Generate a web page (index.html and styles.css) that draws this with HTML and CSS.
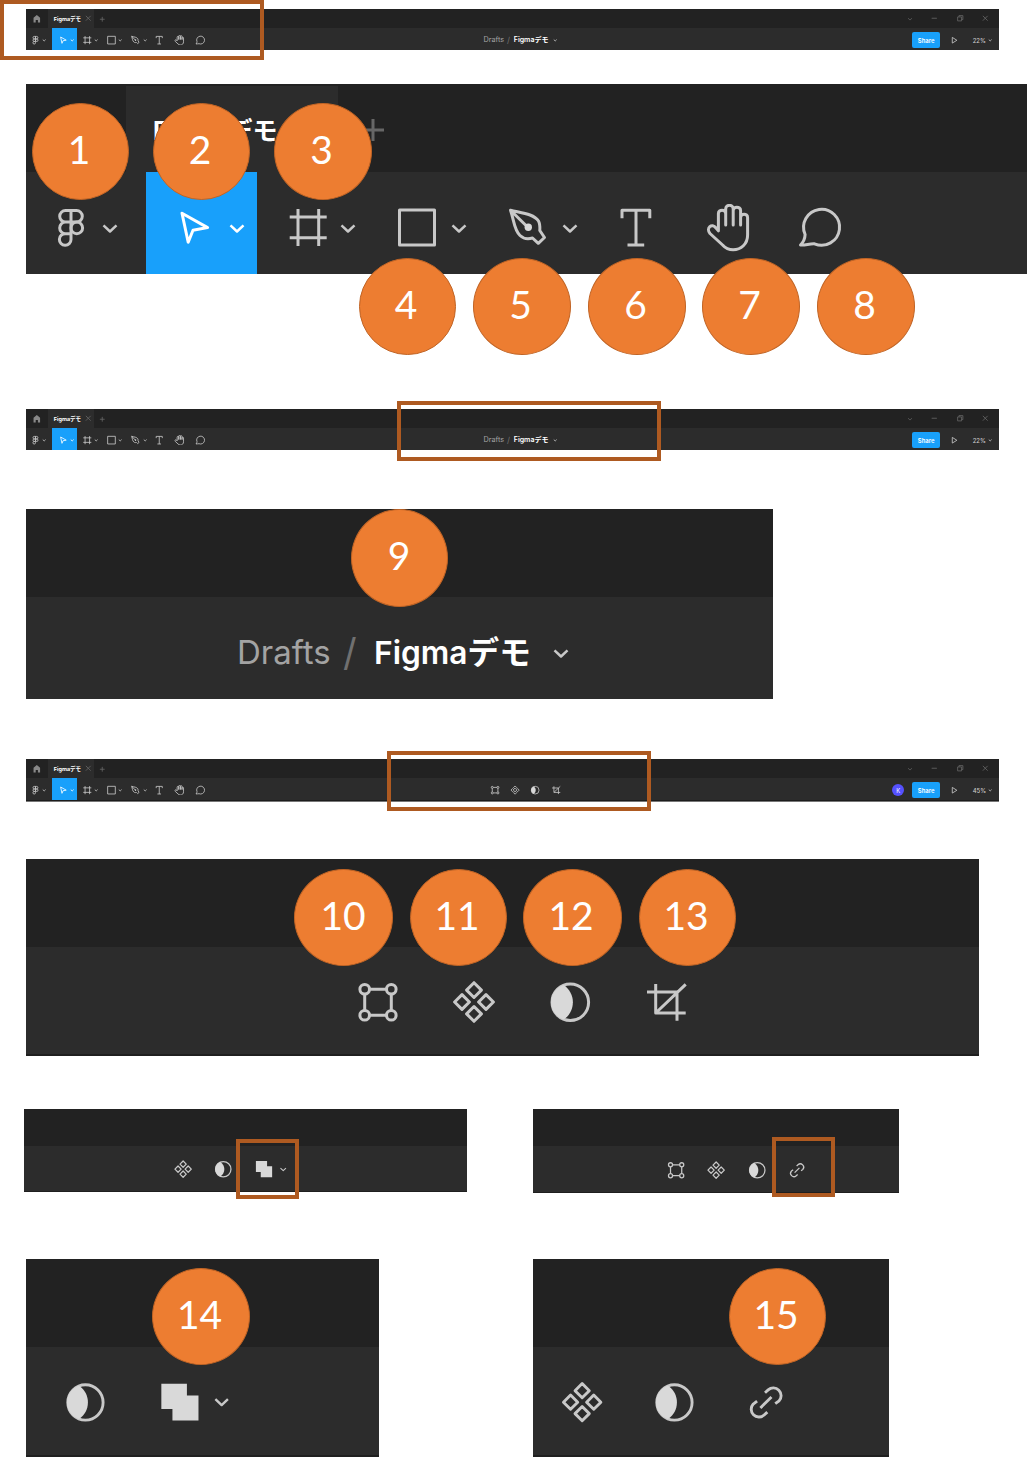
FILE: index.html
```html
<!DOCTYPE html>
<html lang="ja">
<head>
<meta charset="utf-8">
<title>Figmaデモ</title>
<link rel="stylesheet" href="styles.css">
</head>
<body>
<svg class="sprite" aria-hidden="true">
  <symbol id="figma" viewBox="0 0 48 48"><path d="M25 6.500h-5.500a5.800 5.800 0 0 0 0 11.600H25zM25 6.500h5.500a5.800 5.800 0 0 1 0 11.600H25zM25 18.100h-5.500a5.800 5.800 0 0 0 0 11.600H25zM19.500 29.700a5.800 5.800 0 1 0 5.500 5.800v-5.800z"/><circle cx="30.800" cy="23.900" r="5.800"/></symbol>
  <symbol id="move" viewBox="0 0 48 48"><path d="M12 9.200 37.600 23.600 23 26.200 18.200 38.200z"/></symbol>
  <symbol id="frame" viewBox="0 0 48 48"><path d="M14 5v37M34.700 5v37M5.700 13h37M5.700 33.700h37"/></symbol>
  <symbol id="rect" viewBox="0 0 48 48"><path d="M7.500 6h35v35h-35z"/></symbol>
  <symbol id="pen" viewBox="0 0 48 48"><path d="M7.500 6.200C19 9 31 10 35.500 17c1.700 3 1.500 6 1.300 9.500l4.700 7-6.200 5.800-5.800-5.300c-5 1.500-9 .8-12.500-2.500C11 26 11 16 7.500 6.200L24 22.500"/><circle class="solid" cx="25.300" cy="23.300" r="3.700"/></symbol>
  <symbol id="text" viewBox="0 0 48 48"><path d="M10 14.300V6.300h27.800v8M24 6.300V41M15.500 41h16.700"/></symbol>
  <symbol id="hand" viewBox="0 0 48 48"><path d="M14.400 26.800V9.500c0-4.500 7.300-4.500 7.300 0V21 4.800c0-4.700 7.500-4.700 7.500 0V21 6.500c0-4.500 7.400-4.500 7.400 0V21v-7.500c0-4.500 7-4.500 7 0V31c0 9-6.500 14.800-14.500 14.800-4.800 0-8-2-10.500-4.800L6 29.500c-4.500-5.500 2-11 6-5.500z"/></symbol>
  <symbol id="comment" viewBox="0 0 48 48"><path d="M4.500 41c3.500-3.500 4.500-7 4.600-10.500A18 18 0 1 1 18.500 39.800C13.500 39.500 9 41.500 4.500 41z"/></symbol>
  <symbol id="chev" viewBox="0 0 20 20"><path d="M3.500 7.300 10 13.500l6.500-6.200"/></symbol>
  <symbol id="vector" viewBox="0 0 48 48"><path d="M15.500 11.300h17M15.500 37.300h17M10.700 16v16.500M37.300 16v16.500"/><circle cx="10.700" cy="11.300" r="4.800"/><circle cx="37.300" cy="11.300" r="4.800"/><circle cx="10.700" cy="37.300" r="4.800"/><circle cx="37.300" cy="37.300" r="4.800"/></symbol>
  <symbol id="component" viewBox="0 0 48 48"><path d="m24 4.700 7.400 7.400-7.400 7.400-7.400-7.400zM24 28.500l7.400 7.400-7.400 7.400-7.400-7.400zM12 16.600l7.400 7.400-7.400 7.400L4.600 24zM36 16.600l7.400 7.400-7.400 7.400-7.400-7.400z"/></symbol>
  <symbol id="mask" viewBox="0 0 48 48"><circle cx="24.300" cy="24.300" r="18.300"/><path class="solid" d="M17.500 7C30 15 30 33.500 17.500 41.600 1 35 1 13.500 17.500 7z"/></symbol>
  <symbol id="crop" viewBox="0 0 48 48"><path d="M13.700 6v29h30M5 14h30v28.700M13.700 35l30-28.700"/></symbol>
  <symbol id="union" viewBox="0 0 48 48"><path class="solid" d="M4.500 5h26.500V17h12v26h-27V31H4.500z"/></symbol>
  <symbol id="link" viewBox="0 0 48 48"><path d="m18 30 11.500-11.400M22.800 14.300l3.300-3a8 8 0 0 1 11.300 11.300l-4 3M25.200 34.300l-3.300 3a8 8 0 0 1-11.300-11.300l4-3"/></symbol>
  <symbol id="home" viewBox="0 0 48 48"><path class="solid" d="M22 9 7 22v21h10V32h10v11h10V22z"/></symbol>
  <symbol id="close" viewBox="0 0 48 48"><path d="m13 13 22 22M35 13 13 35"/></symbol>
  <symbol id="plus" viewBox="0 0 48 48"><path d="M24 13v22M13 24h22"/></symbol>
  <symbol id="min" viewBox="0 0 48 48"><path d="M12 24h24"/></symbol>
  <symbol id="restore" viewBox="0 0 48 48"><path d="M12 18h18v18H12zM18 18v-6h18v18h-6"/></symbol>
  <symbol id="play" viewBox="0 0 48 48"><path d="M15 11v26l21-13z"/></symbol>
</svg>

<main>
  <section class="panel bar">
    <header class="titlebar">
      <span class="homebox"><svg class="i dim"><use href="#home"/></svg></span>
      <span class="tab"><b>Figmaデモ</b><svg class="i dim"><use href="#close"/></svg></span>
      <svg class="i dim plus"><use href="#plus"/></svg>
      <span class="window"><svg class="c dim"><use href="#chev"/></svg><svg class="i dim"><use href="#min"/></svg><svg class="i dim"><use href="#restore"/></svg><svg class="i dim"><use href="#close"/></svg></span>
    </header>
    <div class="toolbar">
      <nav class="tools">
        <span class="tool main"><svg class="i"><use href="#figma"/></svg><svg class="c"><use href="#chev"/></svg></span>
        <span class="tool active"><svg class="i"><use href="#move"/></svg><svg class="c"><use href="#chev"/></svg></span>
        <span class="tool framer"><svg class="i"><use href="#frame"/></svg><svg class="c"><use href="#chev"/></svg></span>
        <span class="tool"><svg class="i"><use href="#rect"/></svg><svg class="c"><use href="#chev"/></svg></span>
        <span class="tool"><svg class="i"><use href="#pen"/></svg><svg class="c"><use href="#chev"/></svg></span>
        <span class="tool single"><svg class="i"><use href="#text"/></svg></span>
        <span class="tool single"><svg class="i"><use href="#hand"/></svg></span>
        <span class="tool single"><svg class="i"><use href="#comment"/></svg></span>
      </nav>
      <div class="crumb"><span class="drafts">Drafts</span><span class="slash">/</span><span class="file">Figmaデモ</span><svg class="c"><use href="#chev"/></svg></div>
      <div class="right"><span class="share">Share</span><svg class="i play"><use href="#play"/></svg><span class="zoom">22%</span><svg class="c"><use href="#chev"/></svg></div>
    </div>
    <i class="mark mark-a"></i>
  </section>

  <section class="panel large tools-detail">
    <header class="titlebar">
      <span class="homebox"><svg class="i dim"><use href="#home"/></svg></span>
      <span class="tab"><b>Figmaデモ</b></span>
      <svg class="i dim plus"><use href="#plus"/></svg>
    </header>
    <div class="toolbar">
      <nav class="tools">
        <span class="tool main"><svg class="i"><use href="#figma"/></svg><svg class="c"><use href="#chev"/></svg></span>
        <span class="tool active"><svg class="i"><use href="#move"/></svg><svg class="c"><use href="#chev"/></svg></span>
        <span class="tool framer"><svg class="i"><use href="#frame"/></svg><svg class="c"><use href="#chev"/></svg></span>
        <span class="tool"><svg class="i"><use href="#rect"/></svg><svg class="c"><use href="#chev"/></svg></span>
        <span class="tool"><svg class="i"><use href="#pen"/></svg><svg class="c"><use href="#chev"/></svg></span>
        <span class="tool single"><svg class="i"><use href="#text"/></svg></span>
        <span class="tool single"><svg class="i"><use href="#hand"/></svg></span>
        <span class="tool single"><svg class="i"><use href="#comment"/></svg></span>
      </nav>
    </div>
    <span class="badge b1">1</span><span class="badge b2">2</span><span class="badge b3">3</span>
    <span class="badge b4">4</span><span class="badge b5">5</span><span class="badge b6">6</span><span class="badge b7">7</span><span class="badge b8">8</span>
  </section>

  <section class="panel bar second">
    <header class="titlebar">
      <span class="homebox"><svg class="i dim"><use href="#home"/></svg></span>
      <span class="tab"><b>Figmaデモ</b><svg class="i dim"><use href="#close"/></svg></span>
      <svg class="i dim plus"><use href="#plus"/></svg>
      <span class="window"><svg class="c dim"><use href="#chev"/></svg><svg class="i dim"><use href="#min"/></svg><svg class="i dim"><use href="#restore"/></svg><svg class="i dim"><use href="#close"/></svg></span>
    </header>
    <div class="toolbar">
      <nav class="tools">
        <span class="tool main"><svg class="i"><use href="#figma"/></svg><svg class="c"><use href="#chev"/></svg></span>
        <span class="tool active"><svg class="i"><use href="#move"/></svg><svg class="c"><use href="#chev"/></svg></span>
        <span class="tool framer"><svg class="i"><use href="#frame"/></svg><svg class="c"><use href="#chev"/></svg></span>
        <span class="tool"><svg class="i"><use href="#rect"/></svg><svg class="c"><use href="#chev"/></svg></span>
        <span class="tool"><svg class="i"><use href="#pen"/></svg><svg class="c"><use href="#chev"/></svg></span>
        <span class="tool single"><svg class="i"><use href="#text"/></svg></span>
        <span class="tool single"><svg class="i"><use href="#hand"/></svg></span>
        <span class="tool single"><svg class="i"><use href="#comment"/></svg></span>
      </nav>
      <div class="crumb"><span class="drafts">Drafts</span><span class="slash">/</span><span class="file">Figmaデモ</span><svg class="c"><use href="#chev"/></svg></div>
      <div class="right"><span class="share">Share</span><svg class="i play"><use href="#play"/></svg><span class="zoom">22%</span><svg class="c"><use href="#chev"/></svg></div>
    </div>
    <i class="mark mark-b"></i>
  </section>

  <section class="panel large name-detail">
    <header class="titlebar"></header>
    <div class="toolbar">
      <div class="crumb"><span class="drafts">Drafts</span><span class="slash">/</span><span class="file">Figmaデモ</span><svg class="c"><use href="#chev"/></svg></div>
    </div>
    <span class="badge b9">9</span>
  </section>

  <section class="panel bar third">
    <header class="titlebar">
      <span class="homebox"><svg class="i dim"><use href="#home"/></svg></span>
      <span class="tab"><b>Figmaデモ</b><svg class="i dim"><use href="#close"/></svg></span>
      <svg class="i dim plus"><use href="#plus"/></svg>
      <span class="window"><svg class="c dim"><use href="#chev"/></svg><svg class="i dim"><use href="#min"/></svg><svg class="i dim"><use href="#restore"/></svg><svg class="i dim"><use href="#close"/></svg></span>
    </header>
    <div class="toolbar">
      <nav class="tools">
        <span class="tool main"><svg class="i"><use href="#figma"/></svg><svg class="c"><use href="#chev"/></svg></span>
        <span class="tool active"><svg class="i"><use href="#move"/></svg><svg class="c"><use href="#chev"/></svg></span>
        <span class="tool framer"><svg class="i"><use href="#frame"/></svg><svg class="c"><use href="#chev"/></svg></span>
        <span class="tool"><svg class="i"><use href="#rect"/></svg><svg class="c"><use href="#chev"/></svg></span>
        <span class="tool"><svg class="i"><use href="#pen"/></svg><svg class="c"><use href="#chev"/></svg></span>
        <span class="tool single"><svg class="i"><use href="#text"/></svg></span>
        <span class="tool single"><svg class="i"><use href="#hand"/></svg></span>
        <span class="tool single"><svg class="i"><use href="#comment"/></svg></span>
      </nav>
      <div class="modes"><svg class="i"><use href="#vector"/></svg><svg class="i"><use href="#component"/></svg><svg class="i"><use href="#mask"/></svg><svg class="i"><use href="#crop"/></svg></div>
      <div class="right"><span class="avatar">K</span><span class="share">Share</span><svg class="i play"><use href="#play"/></svg><span class="zoom">45%</span><svg class="c"><use href="#chev"/></svg></div>
    </div>
    <i class="mark mark-c"></i>
  </section>

  <section class="panel large modes-detail">
    <header class="titlebar"></header>
    <div class="toolbar">
      <div class="modes"><svg class="i"><use href="#vector"/></svg><svg class="i"><use href="#component"/></svg><svg class="i"><use href="#mask"/></svg><svg class="i"><use href="#crop"/></svg></div>
    </div>
    <span class="badge b10">10</span><span class="badge b11">11</span><span class="badge b12">12</span><span class="badge b13">13</span>
  </section>

  <div class="pair pair-mid">
    <section class="panel mid union-mid">
      <header class="titlebar"></header>
      <div class="toolbar">
        <div class="modes"><svg class="i"><use href="#component"/></svg><svg class="i"><use href="#mask"/></svg><svg class="i"><use href="#union"/></svg><svg class="c"><use href="#chev"/></svg></div>
      </div>
      <i class="mark mark-d"></i>
    </section>
    <section class="panel mid link-mid">
      <header class="titlebar"></header>
      <div class="toolbar">
        <div class="modes"><svg class="i"><use href="#vector"/></svg><svg class="i"><use href="#component"/></svg><svg class="i"><use href="#mask"/></svg><svg class="i"><use href="#link"/></svg></div>
      </div>
      <i class="mark mark-e"></i>
    </section>
  </div>

  <div class="pair pair-big">
    <section class="panel large close-up union-big">
      <header class="titlebar"></header>
      <div class="toolbar">
        <div class="modes"><svg class="i"><use href="#mask"/></svg><svg class="i"><use href="#union"/></svg><svg class="c"><use href="#chev"/></svg></div>
      </div>
      <span class="badge b14">14</span>
    </section>
    <section class="panel large close-up link-big">
      <header class="titlebar"></header>
      <div class="toolbar">
        <div class="modes"><svg class="i"><use href="#component"/></svg><svg class="i"><use href="#mask"/></svg><svg class="i"><use href="#link"/></svg></div>
      </div>
      <span class="badge b15">15</span>
    </section>
  </div>
</main>
</body>
</html>
```
FILE: styles.css
```css
* { box-sizing: border-box; }
body { margin: 0; background: #fff; font-family: Inter, "Noto Sans CJK JP", sans-serif; overflow: hidden; }
main { width: 1027px; height: 1457px; padding: 9px 0 0 26px; overflow: hidden; }
.sprite { display: none; }

/* --k is the scale of a panel: 1 for the enlarged details */
.panel { --k: 1px; position: relative; display: flex; flex-direction: column; background: #2c2c2c; color: #c8c8c8; }
.titlebar { display: flex; align-items: center; flex: none; height: 88px; background: #222; }
.toolbar { display: flex; align-items: center; flex: 1; min-height: 0; }
.i, .c { flex: none; display: block; fill: none; stroke: currentColor; stroke-width: 3; stroke-linejoin: round; }
.i { width: calc(48 * var(--k)); height: calc(48 * var(--k)); }
.c { width: calc(20 * var(--k)); height: calc(20 * var(--k)); stroke-width: 2.500; }
.solid { fill: #d9d9d9; stroke: none; }
.dim { color: #666; }
.dim .solid, #home .solid { fill: #888; }

.homebox { display: flex; justify-content: center; flex: none; width: calc(100 * var(--k)); }
.tab { display: flex; align-items: center; flex: none; align-self: flex-end; width: calc(212 * var(--k)); height: calc(86 * var(--k)); padding-left: calc(27 * var(--k)); background: #2c2c2c; color: #fff; font-size: calc(25 * var(--k)); white-space: nowrap; }
.tab b { width: calc(133 * var(--k)); font-weight: 700; }
.plus { margin: calc(4 * var(--k)) 0 0 calc(11 * var(--k)); }

.tools { display: flex; align-self: stretch; flex: none; }
.tool { display: flex; align-items: center; width: calc(111 * var(--k)); padding: calc(10 * var(--k)) 0 0 calc(24 * var(--k)); gap: calc(8.500 * var(--k)); }
.tool.main { width: calc(120 * var(--k)); padding-left: calc(20 * var(--k)); gap: calc(5.500 * var(--k)); }
.tool.framer { padding-left: calc(27 * var(--k)); gap: calc(5.500 * var(--k)); }
.tool.single { width: calc(92 * var(--k)); padding-left: calc(22 * var(--k)); }
.tool.active { background: #18a0fb; color: #fff; }

.crumb { display: flex; align-items: center; padding-top: calc(10 * var(--k)); font-size: calc(33 * var(--k)); white-space: nowrap; line-height: 1.2; }
.drafts { width: calc(106 * var(--k)); color: #a3a3a3; }
.slash { width: calc(31 * var(--k)); color: #707070; font-size: 1.15em; }
.file { width: calc(177 * var(--k)); color: #fff; font-size: calc(31.700 * var(--k)); font-weight: 600; }
.modes { display: flex; align-items: center; gap: calc(48 * var(--k)); }

.bar { --k: .219px; width: 973px; height: 41px; }
.bar .titlebar { height: 19px; }
.bar .i, .bar .c { stroke-width: 3.800; }
.window { display: flex; align-items: center; gap: 14.800px; margin-left: auto; padding-right: 8.500px; }
.window .c { width: 6px; height: 6px; margin-right: 2px; stroke-width: 2; }
.bar .titlebar .window .c { stroke-width: 2.400; }
.bar .tools { width: 457px; }
.bar .modes { --k: .2125px; margin-left: 6.500px; padding-top: 2px; }
.bar .crumb { --k: .221px; padding: 3px 0 0 .5px; }
.right { display: flex; align-items: center; margin-left: auto; padding: 2px 7px 0 0; font-size: 5.900px; }
.share { display: flex; align-items: center; justify-content: center; width: 28px; height: 16px; border-radius: 2px; background: #18a0fb; color: #fff; font-weight: 600; }
.play { margin: 0 13px 0 9px; }
.zoom { width: 15px; font-weight: 500; white-space: nowrap; }
.avatar { display: flex; align-items: center; justify-content: center; width: 12px; height: 12px; margin-right: 8px; border-radius: 50%; background: #5551ff; color: #fff; }

.tools-detail { width: 1001px; height: 190px; margin-top: 34px; }
.second { margin-top: 135px; }
.name-detail { width: 747px; height: 190px; margin-top: 59px; }
.name-detail .toolbar { padding-left: 211px; }
.third { height: 43px; margin-top: 60px; }
.third .toolbar { border-bottom: 1px solid #777; box-shadow: inset 0 -1px #1c1c1c; flex: none; height: 24px; }
.third .tools, .third .modes, .third .right { padding-bottom: 1px; }
.modes-detail { width: 953px; height: 197px; margin-top: 57px; }
.modes-detail .toolbar { padding: 2px 0 0 328px; border-bottom: 2px solid #1f1f1f; }

.pair { display: grid; align-items: start; }
.pair-mid { grid-template-columns: 509px 366px; margin: 53px 0 0 -2px; }
.pair-big { grid-template-columns: 507px 356px; margin-top: 66px; }
.mid { --k: .422px; }
.mid .titlebar { height: 37px; }
.mid .toolbar { border-bottom: 1px solid #1f1f1f; }
.union-mid { width: 443px; height: 83px; }
.union-mid .toolbar { padding: 2px 0 0 148.500px; }
.union-mid .modes { gap: 20.500px; }
.union-mid .c { margin-left: -16px; }
.link-mid { width: 366px; height: 84px; }
.link-mid .toolbar { padding: 2px 0 0 132.500px; }
.close-up { --k: .965px; height: 198px; }
.close-up .toolbar { border-bottom: 2px solid #1f1f1f; padding-top: 2px; }
.union-big { width: 353px; }
.union-big .toolbar { padding-left: 36px; }
.union-big .modes { gap: 49px; }
.union-big .c { margin-left: -40.500px; }
.link-big .toolbar { padding-left: 26px; }
.link-big .modes { gap: 45.700px; }

/* Highlight frames and numbered callouts lie over the panels */
.mark { position: absolute; width: 264px; height: 60px; border: 4px solid #ae5a21; }
.mark-a { left: -26px; top: -9px; }
.mark-b { left: 371px; top: -8px; }
.mark-c { left: 361px; top: -8px; }
.mark-d { left: 212px; top: 30px; width: 63px; }
.mark-e { left: 239px; top: 28px; width: 63px; }
.badge { position: absolute; display: flex; align-items: center; justify-content: center; width: 97px; height: 97px; padding: 0 3px 4px 0; border: 1px solid #c06425; border-radius: 50%; background: #ed7d31; color: #fff; font: 39px/1 Lato, sans-serif; }
.b1 { left: 6px; top: 19px; }
.b2 { left: 127px; top: 19px; }
.b3 { left: 248px; top: 19px; width: 98px; }
.b4 { left: 333px; top: 174px; }
.b5 { left: 447px; top: 174px; width: 98px; }
.b6 { left: 562px; top: 174px; width: 98px; }
.b7 { left: 676px; top: 174px; width: 98px; }
.b8 { left: 791px; top: 174px; width: 98px; }
.b9 { left: 325px; top: 0; height: 98px; padding: 0 1px 5px 0; }
.b10 { left: 268px; top: 10px; width: 99px; padding-right: 1px; }
.b11 { left: 384px; top: 10px; }
.b12 { left: 497px; top: 10px; width: 99px; }
.b13 { left: 613px; top: 10px; }
.b14 { left: 126px; top: 9px; width: 98px; }
.b15 { left: 196px; top: 9px; }
```
